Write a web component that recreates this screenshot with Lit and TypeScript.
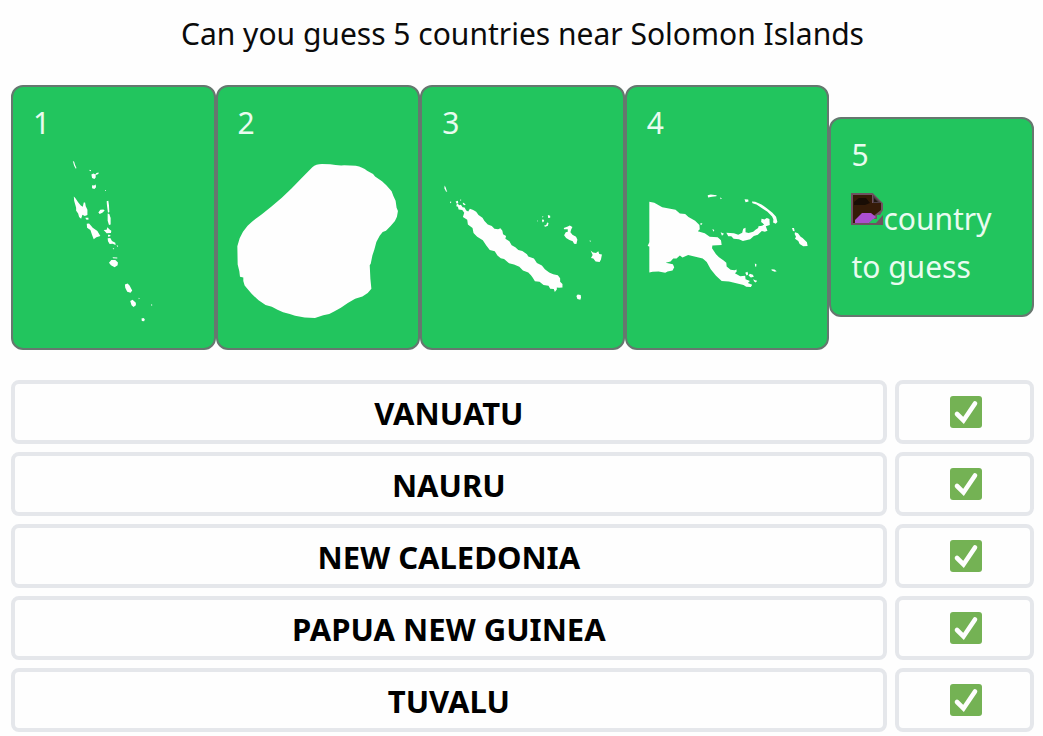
import { LitElement, html, css, svg } from "lit";
import { customElement } from "lit/decorators.js";

interface Shape {
  name: string;
  viewBox: string;
  path: string;
}

const shapes: Shape[] = [
  {
    name: "Vanuatu",
    viewBox: "99 264 484 484",
    path: `M219 258L223 260L226 270L230 279L228 281L223 272Z
      M270 284L274 286L273 289L269 287Z
      M275 299L281 296L287 299L290 294L297 293L296 297L288 300L288 308L284 312L277 309Z
      M277 331L283 332L288 329L289 337L284 342L277 340Z M316 345L319 345L319 348L316 348Z
      M222 365L227 370L235 382L243 392L249 396L252 383L256 383L258 394L263 405L263 421L255 424L248 420L244 432L238 427L235 416L229 408L229 399L223 378Z
      M257 429L266 429L266 435L259 434Z
      M296 413L302 405L311 404L315 407L308 414L300 418Z
      M321 379L326 378L328 391L329 412L325 414L322 393Z
      M324 416L329 418L333 430L333 449L328 451L324 438Z
      M261 447L268 446L274 453L279 459L293 469L302 484L290 488L282 494L277 481L272 466L262 459Z
      M312 466L321 465L323 458L329 464L335 468L334 475L321 476Z
      M325 480L332 481L332 485L325 486Z M324 491L332 490L337 499L347 504L348 511L339 507L330 508L325 500Z
      M351 511L356 514L353 517Z M339 520L344 522L342 525Z
      M339 548L353 549L353 552L340 551Z
      M328 565L335 556L347 556L355 564L354 572L345 578L334 572Z
      M376 630L384 627L390 633L398 648L393 655L383 652L377 640Z
      M392 680L399 676L409 685L409 693L402 698L396 693Z
      M417 670L421 672L418 675Z M455 689L459 692L456 695Z
      M426 733L432 731L436 735L434 741L427 740Z`,
  },
  {
    name: "Nauru",
    viewBox: "83 264 484 484",
    path: `M307 277Q318 267 336 267L361 268Q380 272 403 271L438 272Q459 276 472 287L490 297L496 305L517 319L530 331L546 349L551 363L558 378L561 399L565 409L562 426L556 439L543 454L529 468L519 472L510 483L500 502L494 525L488 543L483 568L480 572L482 613L485 643L474 656L458 666L436 673L414 686L393 700L374 711L358 719L340 723L315 731L284 730L255 724L239 719L219 714L202 706L185 697L166 692L145 678L124 658L103 633L99 620L99 609L89 607L87 590L82 570L81 515L88 491L98 471L112 453L126 440L154 419L184 395L215 369L245 340L275 309Z`,
  },
  {
    name: "New Caledonia",
    viewBox: "82 264 484 484",
    path: `M90 332L93 337L96 347L98 351L94 350L89 340Z M107 380L110 381L109 385L106 383Z
      M123 380L130 378L131 385L126 386Z M145 383L153 388L151 391L145 388Z M136 374L140 375L139 379Z
      M127 386L135 391L139 390L144 397L150 398L155 407L161 410L166 402L176 406L185 411L192 421L204 429L210 439L220 449L232 454L240 462L251 464L258 461L264 468L266 479L275 484L273 492L285 500L292 512L303 518L312 526L324 529L338 539L342 546L359 552L368 565L383 573L392 584L405 594L417 599L431 602L438 611L438 622L445 629L445 639L435 640L428 639L428 645L422 653L419 644L408 643L403 634L388 632L376 622L362 620L355 609L350 602L342 594L326 588L315 577L299 570L284 566L269 553L259 551L249 543L241 530L226 526L216 513L205 497L188 486L177 475L174 460L160 449L158 435L145 427L149 414L143 406L132 404L130 396L125 394Z
      M401 421L408 423L408 429L402 430Z M384 424L388 426L385 428Z M386 433L390 438L386 443L383 438Z M399 443L403 445L401 453L393 456L389 453L396 451Z
      M368 437L371 438L369 441Z
      M449 460L461 455L467 452L475 457L471 465L469 473L475 480L486 486L490 495L487 508L480 507L476 500L466 496L456 490L450 482L455 473L461 471L461 464L450 464Z
      M527 497L531 499L528 502Z
      M530 528L537 534L546 535L553 530L556 538L564 540L561 555L557 562L545 561L538 552L531 550L536 541Z
      M487 665L491 660L500 662L501 669L499 676L490 674Z`,
  },
  {
    name: "Papua New Guinea",
    viewBox: "80 264 484 484",
    path: `M87 381L102 384L126 397L166 405L179 416L195 418L205 427L225 438L238 451L239 464L233 470L254 476L269 486L293 488L303 497L305 511L277 513L276 521L288 539L297 548L311 558L319 565L320 576L332 586L344 587L350 585L350 592L345 596L361 605L376 604L377 614L390 620L384 626L397 631L393 638L379 637L371 632L346 626L327 621L305 620L288 604L272 584L260 562L248 552L204 541L187 549L179 543L169 552L159 552L151 561L136 565L158 569L162 578L157 588L142 591L135 595L115 591L97 592L87 594L87 516L82 514L87 503Z
      M242 445L247 446L245 450L240 449Z M277 463L283 466L280 471Z M302 473L312 477L306 483Z
      M263 361L272 359L290 361L289 364L276 366L264 368Z M300 368L306 370L302 373Z
      M374 373L385 374L386 380L377 382Z
      M396 380L406 381L425 389L441 400L458 414L469 426L473 442L468 447L460 443L461 434L457 425L443 411L429 402L410 389L398 385Z
      M319 474L342 476L355 480L367 474L368 470L370 462L377 459L377 473L386 475L400 471L407 465L415 460L416 455L427 453L433 449L424 442L425 432L434 434L441 430L449 433L450 451L438 455L443 468L435 471L426 469L414 480L402 484L391 494L369 499L357 494L341 492L334 485L325 485Z
      M517 460L523 460L525 470L520 469Z M526 473L535 476L543 486L549 490L562 503L564 514L551 515L540 508L536 499L526 492L529 486L525 478Z
      M405 567L410 569L409 577L406 576Z M455 584L464 585L471 590L465 592L456 588Z
      M376 595L383 592L385 600L380 603Z M390 598L399 601L402 607L393 609L386 603Z
      M400 614L406 617L412 619L408 624L403 621Z`,
  },
];

const guesses = ["VANUATU", "NAURU", "NEW CALEDONIA", "PAPUA NEW GUINEA", "TUVALU"];

@customElement("app-root")
export class AppRoot extends LitElement {
  static styles = css`
    :host {
      display: block;
      font-family: "Noto Sans", "Open Sans", sans-serif;
      font-size: 30px;
      color: #0b0b0b;
      background: #fefefe;
    }
    main {
      padding: 10px 9px 4px 11px;
    }
    h1 {
      margin: 0 0 27px;
      font-size: inherit;
      font-weight: 400;
      line-height: 48px;
      text-align: center;
    }
    .cards {
      display: grid;
      grid-template-columns: repeat(5, 1fr);
      align-items: center;
      margin-bottom: 30px;
    }
    .card {
      box-sizing: border-box;
      display: flex;
      flex-direction: column;
      gap: 24px;
      padding: 20px 20px 24px;
      border: 2px solid #66776f;
      border-radius: 12px;
      background: #22c55e;
      color: #e9fbf0;
    }
    .number {
      line-height: 32px;
    }
    .shape {
      display: block;
      width: 100%;
      overflow: visible;
      fill: #fefefe;
    }
    .missing {
      line-height: 48px;
    }
    .broken {
      width: 32px;
      height: 32px;
      margin: -5px 0 5px;
    }
    .guesses {
      display: grid;
      gap: 8px;
      margin: 0;
      padding: 0;
      list-style: none;
    }
    .guess {
      display: grid;
      grid-template-columns: repeat(7, 1fr);
      gap: 8px;
    }
    .box {
      box-sizing: border-box;
      display: flex;
      align-items: center;
      justify-content: center;
      height: 64px;
      border: 4px solid #e5e7eb;
      border-radius: 8px;
    }
    .name {
      grid-column: span 6;
      padding-top: 2px;
      font-size: 31px;
      font-weight: 700;
      color: #000;
    }
    .mark {
      padding-left: 3px;
    }
    .tick {
      width: 32px;
      height: 32px;
    }
  `;

  private renderShape(shape: Shape) {
    return html`<svg class="shape" viewBox=${shape.viewBox} role="img" aria-label="country to guess">
      ${svg`<path d=${shape.path}></path>`}
    </svg>`;
  }

  private renderMissing() {
    return html`<div class="missing"><svg class="broken" viewBox="0 0 32 32" aria-hidden="true">
        <path d="M0 0H22L32 10V32H0Z" fill="#6f5260" />
        <path d="M2 2H21V10H30V17L20 25L17 30H2Z" fill="#351b08" />
        <path d="M3 9L8 5H15L19 10L14 12H3Z" fill="#190d05" />
        <path d="M4 30V27L11 20H20L25 24L18 30Z" fill="#ac4fd0" />
        <path d="M32 17V22L25 30H18L22 26H26V22H29Z" fill="#22c55e" />
        <path d="M22 0H32V10Z" fill="#22c55e" />
        <path d="M22 2L30 10H22Z" fill="#4a3c43" />
        <path d="M23 5L27 9H23Z" fill="#22170f" />
      </svg>country to guess</div>`;
  }

  render() {
    return html`
      <main>
        <h1>Can you guess 5 countries near Solomon Islands</h1>
        <section class="cards">
          ${guesses.map(
            (_, i) => html`<div class="card">
              <div class="number">${i + 1}</div>
              ${shapes[i] ? this.renderShape(shapes[i]) : this.renderMissing()}
            </div>`
          )}
        </section>
        <ul class="guesses">
          ${guesses.map(
            (name) => html`<li class="guess">
              <div class="box name">${name}</div>
              <div class="box mark">
                <svg class="tick" viewBox="0 0 32 32" role="img" aria-label="correct">
                  <rect width="32" height="32" rx="3" fill="#74b254" />
                  <path d="M7 18L13.5 24.5L25 7.5" fill="none" stroke="#fefefe" stroke-width="4.6" stroke-linecap="round" stroke-linejoin="miter" />
                </svg>
              </div>
            </li>`
          )}
        </ul>
      </main>
    `;
  }
}
